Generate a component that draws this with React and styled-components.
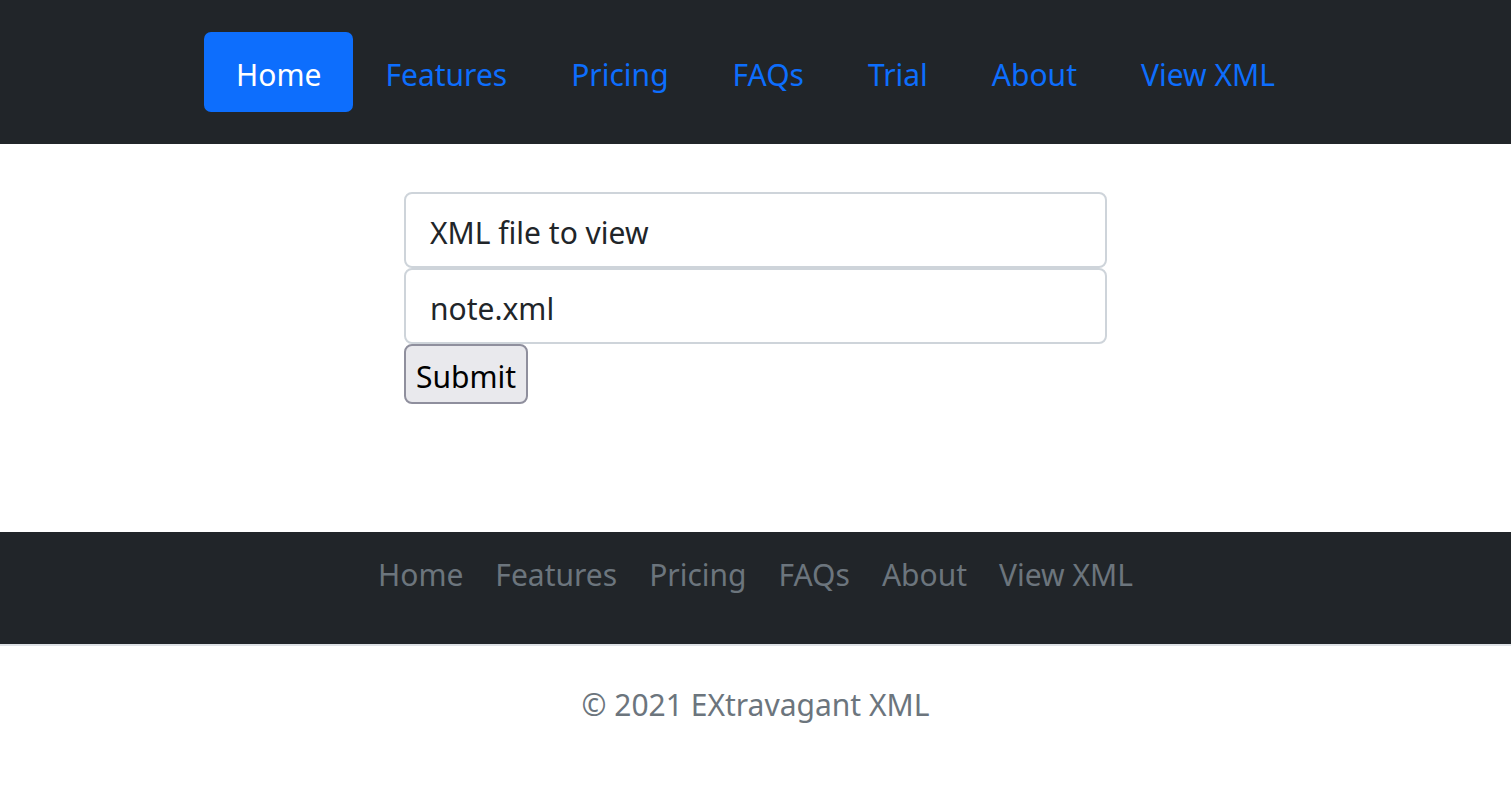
import React from 'react';
import styled, { createGlobalStyle } from 'styled-components';

const GlobalStyle = createGlobalStyle`
  * { box-sizing: border-box; }
  body {
    margin: 0;
    font-family: 'Noto Sans', 'Open Sans', sans-serif;
    font-size: 32px;
    line-height: 1.5;
    color: #212529;
    background: #fff;
  }
`;

const Header = styled.header`
  background: #212529;
  padding: 32px 0;
`;

const Nav = styled.nav`
  display: flex;
  justify-content: center;
  flex-wrap: wrap;
`;

const NavLink = styled.a`
  display: block;
  padding: 19px 32px 13px;
  border-radius: 7px;
  text-decoration: none;
  font-size: 30px;
  line-height: 48px;
  color: ${(p) => (p.$active ? '#fff' : '#0d6efd')};
  background: ${(p) => (p.$active ? '#0d6efd' : 'transparent')};
`;

const Main = styled.main`
  padding: 48px 0;
  height: 388px;
`;

const Form = styled.form`
  width: 703px;
  margin: 0 auto;
  display: flex;
  flex-direction: column;
  align-items: flex-start;
`;

const Field = styled.div`
  width: 100%;
  height: 76px;
  padding: 15px 24px 9px;
  border: 2px solid #ced4da;
  border-radius: 8px;
  font-size: 30px;
  line-height: 48px;
  color: #212529;
  background: #fff;
`;

const Button = styled.button`
  font-family: inherit;
  font-size: 30px;
  line-height: 48px;
  color: #000;
  background: #e9e9ed;
  border: 2px solid #8f8f9d;
  border-radius: 8px;
  padding: 7px 10px 1px;
  cursor: pointer;
`;

const FooterBar = styled.div`
  background: #212529;
  padding-bottom: 32px;
  border-bottom: 2px solid #dee2e6;
`;

const FooterLink = styled.a`
  display: block;
  padding: 19px 16px 13px;
  font-size: 30px;
  line-height: 48px;
  color: #6c757d;
  text-decoration: none;
`;

const Copy = styled.p`
  margin: 0;
  padding: 35px 0 0;
  text-align: center;
  font-size: 30px;
  line-height: 48px;
  color: #6c757d;
`;

const topLinks = ['Home', 'Features', 'Pricing', 'FAQs', 'Trial', 'About', 'View XML'];
const footLinks = ['Home', 'Features', 'Pricing', 'FAQs', 'About', 'View XML'];

export default function App() {
  return (
    <>
      <GlobalStyle />
      <Header>
        <Nav>
          {topLinks.map((l, i) => (
            <NavLink key={l} href="#" $active={i === 0}>
              {l}
            </NavLink>
          ))}
        </Nav>
      </Header>
      <Main>
        <Form onSubmit={(e) => e.preventDefault()}>
          <Field>XML file to view</Field>
          <Field>note.xml</Field>
          <Button type="submit">Submit</Button>
        </Form>
      </Main>
      <footer>
        <FooterBar>
          <Nav>
            {footLinks.map((l) => (
              <FooterLink key={l} href="#">
                {l}
              </FooterLink>
            ))}
          </Nav>
        </FooterBar>
        <Copy>© 2021 EXtravagant XML</Copy>
      </footer>
    </>
  );
}
